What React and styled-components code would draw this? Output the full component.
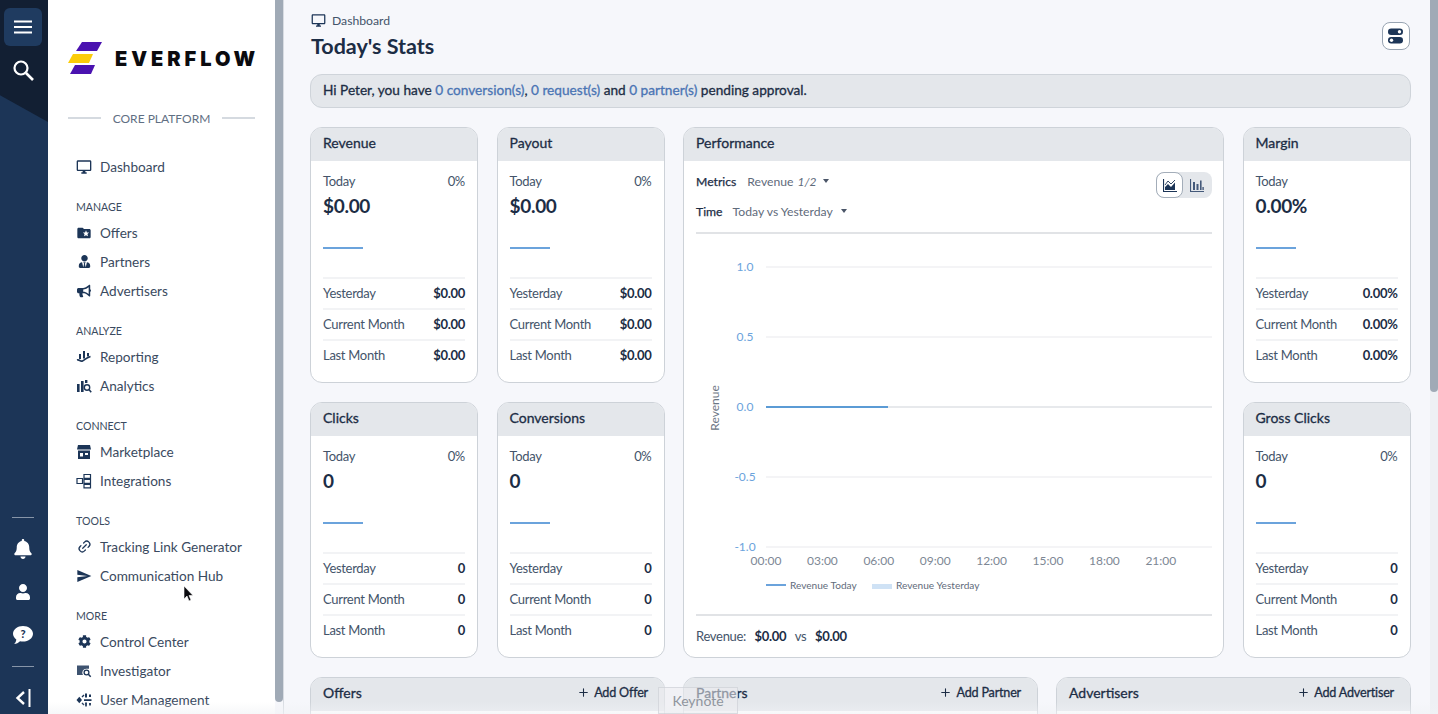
import React from "react";
import styled, { createGlobalStyle } from "styled-components";
import { FaBell, FaBullhorn, FaCog, FaUser, FaUserTie } from "react-icons/fa";
import { MdFolderSpecial, MdOutlineDesktopWindows, MdSend } from "react-icons/md";
import { Link2, Plus } from "lucide-react";

const GlobalStyle = createGlobalStyle`
  html, body {
    margin: 0;
    height: 100%;
    overflow: hidden;
    font-family: Lato, "Liberation Sans", sans-serif;
    background: #f6f7fb;
    color: #1c2d45;
  }
  * { box-sizing: border-box; }
`;

const Page = styled.div`
  position: relative;
  display: flex;
  width: 1438px;
  height: 714px;
  overflow: hidden;
`;

const Rail = styled.nav`
  position: relative;
  flex: 0 0 48px;
  display: flex;
  flex-direction: column;
  align-items: center;
  padding: 8px 2px 0 0;
  background: #1c3557;
  color: #fff;
  overflow: hidden;

  &::before {
    content: "";
    position: absolute;
    inset: 0 0 auto 0;
    height: 122px;
    background: #121f33;
    clip-path: polygon(0 0, 100% 0, 100% 100%, 0 78%);
  }
`;

const RailButton = styled.div`
  position: relative;
  flex-shrink: 0;
  display: flex;
  align-items: center;
  justify-content: center;
  width: 38px;
  height: 38px;
  border-radius: 6px;
  background: ${(p) => (p.$active ? "#1f3b60" : "transparent")};
`;

const RailIcon = styled.div`
  position: relative;
  flex-shrink: 0;
  display: flex;
  align-items: center;
  justify-content: center;
  width: 24px;
  height: ${(p) => p.$h || 43}px;
`;

const RailRule = styled.div`
  flex-shrink: 0;
  width: 22px;
  height: 1px;
  background: #8795a8;
  margin: ${(p) => p.$m || "0"};
`;

const Sidebar = styled.aside`
  flex: 0 0 227px;
  padding: 42px 20px 0;
  background: #fff;
  overflow: hidden;
`;

const Logo = styled.div`
  display: flex;
  align-items: center;
  height: 32px;
  gap: 13px;
`;

const LogoSvg = styled.svg`
  flex-shrink: 0;
`;

const LogoWord = styled.span`
  font-family: Inter, sans-serif;
  font-weight: 900;
  font-size: 20px;
  letter-spacing: 3.95px;
  color: #0b0b0f;
  line-height: 1;
  white-space: nowrap;
  padding-top: 2px;
`;

const PlatformRule = styled.div`
  display: flex;
  align-items: center;
  justify-content: space-between;
  margin-top: 36px;
  height: 16px;
  font-size: 12px;
  color: #5f6f83;

  &::before,
  &::after {
    content: "";
    width: 33px;
    height: 1.5px;
    background: #d5dae0;
  }
`;

const NavHeading = styled.div`
  height: 14px;
  margin: 18.5px 0 4.5px 8px;
  font-size: 10.6px;
  line-height: 14px;
  color: #3a4a60;
`;

const NavGroup = styled.div`
  margin-top: ${(p) => p.$top || 0}px;
`;

const NavItem = styled.div`
  display: flex;
  align-items: center;
  height: 29px;
  padding-left: 8px;
  font-size: 13.6px;
  color: #3a4a60;
`;

const NavIconBox = styled.span`
  display: flex;
  align-items: center;
  justify-content: center;
  width: 16px;
  margin-right: 8px;
  color: #1c3557;
`;

const SideScroll = styled.div`
  flex: 0 0 8px;
  height: 702px;
  background: #a0aab6;
  border-radius: 0 0 4px 4px;
`;

const Main = styled.main`
  flex: 1;
  min-width: 0;
  padding: 13px 19px 0 26px;
  border-left: 1px solid #d8dce2;
`;

const PageScroll = styled.div`
  flex: 0 0 8px;
  height: 100%;
  background: #eef0f4;

  &::before {
    content: "";
    display: block;
    height: 392px;
    background: #a0aab6;
    border-radius: 0 0 4px 4px;
  }
`;

const PageHeader = styled.header`
  display: flex;
  justify-content: space-between;
  height: 61px;
`;

const Crumb = styled.div`
  display: flex;
  align-items: center;
  gap: 6px;
  height: 15px;
  font-size: 12.2px;
  color: #44546a;
  padding-left: 1px;
`;

const Title = styled.h1`
  margin: 5px 0 0 1px;
  font-size: 21.5px;
  line-height: 26px;
  font-weight: 700;
  color: #1c2d45;
`;

const ToggleButton = styled.div`
  display: flex;
  align-items: center;
  justify-content: center;
  width: 28px;
  height: 28px;
  margin: 9px 1px 0 0;
  background: #fff;
  border: 1px solid #98a4b2;
  border-radius: 8px;
`;

const Banner = styled.div`
  display: flex;
  align-items: center;
  height: 34px;
  padding: 0 12px 2px;
  background: #e4e7eb;
  border: 1px solid #cfd4da;
  border-radius: 12px;
  font-size: 13.65px;
  -webkit-text-stroke: 0.3px currentColor;
  color: #1c2d45;
  white-space: pre;
  margin-bottom: 19px;
`;

const BannerLink = styled.span`
  color: #4a74b4;
`;

const Grid = styled.div`
  display: grid;
  grid-template-columns: 168px 168px 541px 168px;
  grid-auto-rows: 256px;
  column-gap: 18.5px;
  row-gap: 19px;
`;

const Card = styled.section`
  display: flex;
  flex-direction: column;
  background: #fff;
  border: 1px solid #cdd2d8;
  border-radius: 12px;
  overflow: hidden;
  grid-row: ${(p) => p.$rows || "auto"};
  grid-column: ${(p) => p.$col || "auto"};
`;

const CardHead = styled.div`
  flex: 0 0 33px;
  display: flex;
  align-items: center;
  justify-content: space-between;
  padding: 0 16px 4px 12px;
  background: #e4e7eb;
  font-size: 14px;
  -webkit-text-stroke: 0.3px currentColor;
  color: #1c2d45;
`;

const CardBody = styled.div`
  flex: 1;
  padding: 12px 12px 0;
`;

const TodayRow = styled.div`
  display: flex;
  justify-content: space-between;
  height: 16px;
  font-size: 13px;
  letter-spacing: -0.3px;
  line-height: 16px;
  color: #44546a;
`;

const BigValue = styled.div`
  margin-top: 4px;
  height: 26px;
  font-size: 19px;
  letter-spacing: -0.3px;
  line-height: 26px;
  font-weight: 700;
  color: #1c2d45;
`;

const Spark = styled.div`
  width: 40px;
  height: 2px;
  margin: 28px 0 28px;
  background: #6ba3dc;
`;

const StatRow = styled.div`
  display: flex;
  align-items: center;
  justify-content: space-between;
  height: 31px;
  padding-bottom: 2px;
  border-top: 2px solid #f2f3f5;
  font-size: 13px;
  letter-spacing: -0.3px;
  color: #44546a;
`;

const StatValue = styled.span`
  font-weight: 700;
  color: #1c2d45;
`;

const PerfControls = styled.div`
  position: relative;
  height: 73px;
  padding: 12px 0 0;
  border-bottom: 2px solid #e1e3e6;
`;

const ControlRow = styled.div`
  display: flex;
  align-items: center;
  height: 16px;
  margin-bottom: 14px;
  font-size: 12.2px;
  color: #5f6b7b;
`;

const ControlLabel = styled.span`
  -webkit-text-stroke: 0.25px currentColor;
  color: #1c2d45;
  margin-right: ${(p) => p.$gap}px;
`;

const Ratio = styled.em`
  margin-left: 4px;
  font-size: 12px;
`;

const Caret = styled.span`
  width: 0;
  height: 0;
  margin-left: ${(p) => p.$gap}px;
  border-left: 3.5px solid transparent;
  border-right: 3.5px solid transparent;
  border-top: 4px solid #4a5568;
`;

const ChartSwitch = styled.div`
  position: absolute;
  top: 11px;
  right: 0;
  display: flex;
  width: 56px;
  height: 26px;
  border-radius: 8px;
  background: #e4e7eb;
`;

const SwitchOption = styled.div`
  display: flex;
  align-items: center;
  justify-content: center;
  width: 27px;
  height: 26px;
  border-radius: 8px;
  background: ${(p) => (p.$on ? "#fff" : "transparent")};
  border: ${(p) => (p.$on ? "1.5px solid #a3adb9" : "none")};
`;

const PerfBody = styled.div`
  flex: 1;
  padding: 0 11px 0 12px;
`;

const ChartSvg = styled.svg`
  display: block;
  width: 516px;
  height: 380px;
  font-family: Lato, sans-serif;
`;

const PerfFooter = styled.div`
  display: flex;
  align-items: center;
  gap: 8.5px;
  height: 42px;
  border-top: 2px solid #e1e3e6;
  font-size: 13px;
  letter-spacing: -0.3px;
  color: #44546a;
`;

const WideRow = styled.div`
  display: grid;
  grid-template-columns: repeat(3, 355px);
  column-gap: 18px;
  margin-top: 19px;
`;

const AddLink = styled.span`
  display: flex;
  align-items: center;
  gap: 4px;
  font-size: 12.6px;
  letter-spacing: -0.2px;
`;

const WideCard = styled(Card)`
  height: 60px;
`;

const KeynoteTag = styled.div`
  position: absolute;
  left: 658px;
  top: 687px;
  width: 80px;
  height: 27px;
  display: flex;
  align-items: center;
  justify-content: center;
  border: 1px solid rgba(200, 204, 210, 0.6);
  background: rgba(236, 237, 240, 0.55);
  font-size: 14px;
  color: #8f959d;
`;

const BottomFade = styled.div`
  position: absolute;
  left: 48px;
  right: 0;
  bottom: 0;
  height: 12px;
  background: linear-gradient(rgba(255, 255, 255, 0), rgba(240, 242, 245, 0.6));
  pointer-events: none;
`;

const Pointer = styled.svg`
  position: absolute;
  left: 183px;
  top: 585px;
`;

const Ico = ({ children, s = 16, vb = "0 0 16 16" }) => (
  <svg width={s} height={s} viewBox={vb} fill="none">
    {children}
  </svg>
);

const ReportingIcon = () => (
  <Ico>
    <path d="M3 5h2v5H3zM7 2h2v7.500H7zM11 4h2v3.500h-2z" fill="#1c3557" />
    <path d="M1 11c2.500-1 3 2 5.500 1s3-3 8-4.500" stroke="#1c3557" strokeWidth="1.600" />
  </Ico>
);

const AnalyticsIcon = () => (
  <Ico>
    <path d="M1 6h2.600v8H1zM5 3h2.600v11H5z" fill="#1c3557" />
    <rect x="9" y="2" width="2.400" height="3" fill="#1c3557" />
    <circle cx="11" cy="9.500" r="2.700" stroke="#1c3557" strokeWidth="1.400" />
    <path d="M13 11.600l2.200 2.600" stroke="#1c3557" strokeWidth="1.600" />
  </Ico>
);

const MarketplaceIcon = () => (
  <Ico>
    <path d="M2 1h12l1 4.500H1z" fill="#1c3557" />
    <path d="M2 6.500h12V15H2zM4 9v3.500h3V9zM9 9v2h3V9z" fill="#1c3557" fillRule="evenodd" />
  </Ico>
);

const IntegrationsIcon = () => (
  <Ico>
    <path
      d="M1 5.500h5.500v5H1zM8 1.500h6.500v3.800H8zM8 6.500h6.500v3.800H8zM8 11.500h6.500v3.400H8z"
      stroke="#1c3557"
      strokeWidth="1.200"
    />
  </Ico>
);

const InvestigatorIcon = () => (
  <Ico>
    <path d="M1 2.500h12v3.200h-2.500a4 4 0 0 0-3.500 6.300H1z" fill="#1c3557" opacity="0.85" />
    <circle cx="10.500" cy="9.500" r="2.400" stroke="#1c3557" strokeWidth="1.300" />
    <path d="M12.300 11.300l2.400 2.400" stroke="#1c3557" strokeWidth="1.600" />
  </Ico>
);

const UserManageIcon = () => (
  <Ico>
    <path
      d="M0.500 8l2.800-3.200L6 8l-2.700 3.200zM9 1.500h2v4H9zM8 7.200h7.500v1.800H8zM9 10.600h2v4H9zM13 2.500h2v2.600h-2zM13 11h2v2.600h-2z"
      fill="#1c3557"
    />
    <path d="M6 5l2-2M6 11l2 2" stroke="#1c3557" strokeWidth="1.400" />
  </Ico>
);

const navGroups = [
  {
    title: "MANAGE",
    items: [
      ["Offers", <MdFolderSpecial size={16} />],
      ["Partners", <FaUserTie size={13} />],
      ["Advertisers", <FaBullhorn size={14} />],
    ],
  },
  {
    title: "ANALYZE",
    items: [
      ["Reporting", <ReportingIcon />],
      ["Analytics", <AnalyticsIcon />],
    ],
  },
  {
    title: "CONNECT",
    items: [
      ["Marketplace", <MarketplaceIcon />],
      ["Integrations", <IntegrationsIcon />],
    ],
  },
  {
    title: "TOOLS",
    items: [
      ["Tracking Link Generator", <Link2 size={15} strokeWidth={2} style={{ transform: "rotate(-45deg)" }} />],
      ["Communication Hub", <MdSend size={16} />],
    ],
  },
  {
    title: "MORE",
    items: [
      ["Control Center", <FaCog size={13} />],
      ["Investigator", <InvestigatorIcon />],
      ["User Management", <UserManageIcon />],
    ],
  },
];

const LogoMark = () => (
  <LogoSvg width="34" height="32" viewBox="0 0 34 32">
    <path d="M14 0h20l-5 9H8z" fill="#4a12b0" />
    <path d="M5 12h20l-4 9H0z" fill="#fbcc0a" />
    <path d="M7 23h20l-4 9H2z" fill="#4a12b0" />
  </LogoSvg>
);

const StatCard = ({ title, value, percent, today }) => (
  <Card>
    <CardHead>{title}</CardHead>
    <CardBody>
      <TodayRow>
        <span>Today</span>
        {percent && <span>0%</span>}
      </TodayRow>
      <BigValue>{today}</BigValue>
      <Spark />
      {["Yesterday", "Current Month", "Last Month"].map((label) => (
        <StatRow key={label}>
          <span>{label}</span>
          <StatValue>{value}</StatValue>
        </StatRow>
      ))}
    </CardBody>
  </Card>
);

const yTicks = [
  ["1.0", 33],
  ["0.5", 103],
  ["0.0", 173],
  ["-0.5", 243],
  ["-1.0", 313],
];
const xTicks = ["00:00", "03:00", "06:00", "09:00", "12:00", "15:00", "18:00", "21:00"];

const PerformanceChart = () => (
  <ChartSvg viewBox="0 0 516 380">
    {yTicks.map(([label, y]) => (
      <g key={label}>
        <line x1="70" x2="516" y1={y} y2={y} stroke={y === 173 ? "#dfe2e6" : "#f0f1f3"} strokeWidth="1.500" />
        <text x="49" y={y + 4} textAnchor="middle" fontSize="12" fill="#6ba3dc">
          {label}
        </text>
      </g>
    ))}
    <line x1="70" x2="192" y1="173" y2="173" stroke="#5b9bd5" strokeWidth="2" />
    {xTicks.map((label, i) => (
      <text key={label} x={70 + i * 56.4} y="331" textAnchor="middle" fontSize="12" fill="#7d8794">
        {label}
      </text>
    ))}
    <text transform="translate(23 174) rotate(-90)" textAnchor="middle" fontSize="12" fill="#6b7684">
      Revenue
    </text>
    <line x1="70" x2="90" y1="351" y2="351" stroke="#6ba3dc" strokeWidth="2" />
    <text x="94" y="355" fontSize="10.1" fill="#5f6b7b">
      Revenue Today
    </text>
    <rect x="176" y="350" width="20" height="5" fill="#cfe2f5" />
    <text x="200" y="355" fontSize="10.1" fill="#5f6b7b">
      Revenue Yesterday
    </text>
  </ChartSvg>
);

const App = () => (
  <Page>
    <GlobalStyle />
    <Rail>
      <RailButton $active>
        <svg width="18" height="14" viewBox="0 0 18 14">
          <path d="M0 1.500h18M0 7h18M0 12.500h18" stroke="#fff" strokeWidth="2" />
        </svg>
      </RailButton>
      <RailIcon $h="47">
        <svg width="22" height="22" viewBox="0 0 22 22" fill="none">
          <circle cx="9" cy="9" r="6.500" stroke="#fff" strokeWidth="2.200" />
          <path d="M14 14l7 7" stroke="#fff" strokeWidth="2.600" />
        </svg>
      </RailIcon>
      <RailRule $m="424px 0 0" />
      <RailIcon $h="62">
        <FaBell size={20} />
      </RailIcon>
      <RailIcon $h="24">
        <FaUser size={16} />
      </RailIcon>
      <RailIcon $h="62">
        <svg width="20" height="19" viewBox="0 0 20 19">
          <path
            d="M10 0c5.500 0 10 3.400 10 7.800s-4.500 7.800-10 7.800c-1 0-2-.1-3-.4C5.500 16.700 3.400 18 1 18c1.400-1.200 2.200-2.800 2.300-4.600C1.300 12 0 10 0 7.800 0 3.400 4.500 0 10 0z"
            fill="#fff"
          />
          <text x="10" y="12" textAnchor="middle" fontSize="11" fontWeight="900" fill="#1c3557" fontFamily="Lato">
            ?
          </text>
        </svg>
      </RailIcon>
      <RailRule />
      <RailIcon $h="62">
        <svg width="16" height="18" viewBox="0 0 16 18" fill="none">
          <path d="M9 3L2.500 9 9 15" stroke="#fff" strokeWidth="2.400" />
          <path d="M14.500 0v18" stroke="#fff" strokeWidth="2" />
        </svg>
      </RailIcon>
    </Rail>

    <Sidebar>
      <Logo>
        <LogoMark />
        <LogoWord>EVERFLOW</LogoWord>
      </Logo>
      <PlatformRule>CORE PLATFORM</PlatformRule>
      <NavGroup $top="26">
        <NavItem>
          <NavIconBox>
            <MdOutlineDesktopWindows size={16} />
          </NavIconBox>
          Dashboard
        </NavItem>
      </NavGroup>
      {navGroups.map((group) => (
        <NavGroup key={group.title}>
          <NavHeading>{group.title}</NavHeading>
          {group.items.map(([label, icon]) => (
            <NavItem key={label}>
              <NavIconBox>{icon}</NavIconBox>
              {label}
            </NavItem>
          ))}
        </NavGroup>
      ))}
    </Sidebar>
    <SideScroll />

    <Main>
      <PageHeader>
        <div>
          <Crumb>
            <MdOutlineDesktopWindows size={15} color="#1c3557" />
            Dashboard
          </Crumb>
          <Title>Today's Stats</Title>
        </div>
        <ToggleButton>
          <svg width="16" height="16" viewBox="0 0 16 16">
            <rect x="0" y="0.500" width="15" height="6.500" rx="3.200" fill="#1c3557" />
            <circle cx="11.500" cy="3.700" r="1.700" fill="#fff" />
            <rect x="0" y="9" width="15" height="6.500" rx="3.200" fill="#1c3557" />
            <circle cx="3.500" cy="12.200" r="1.700" fill="#fff" />
          </svg>
        </ToggleButton>
      </PageHeader>

      <Banner>
        Hi Peter, you have <BannerLink>0 conversion(s)</BannerLink>, <BannerLink>0 request(s)</BannerLink> and{" "}
        <BannerLink>0 partner(s)</BannerLink> pending approval.
      </Banner>

      <Grid>
        <StatCard title="Revenue" today="$0.00" value="$0.00" percent />
        <StatCard title="Payout" today="$0.00" value="$0.00" percent />
        <Card $rows="1 / span 2" $col="3">
          <CardHead>Performance</CardHead>
          <PerfBody>
            <PerfControls>
              <ControlRow>
                <ControlLabel $gap={11}>Metrics</ControlLabel>
                Revenue
                <Ratio>1/2</Ratio>
                <Caret $gap={7} />
              </ControlRow>
              <ControlRow>
                <ControlLabel $gap={10}>Time</ControlLabel>
                Today vs Yesterday
                <Caret $gap={8} />
              </ControlRow>
              <ChartSwitch>
                <SwitchOption $on>
                  <svg width="14" height="13" viewBox="0 0 14 13" fill="none">
                    <path d="M0.500 0v12.500H14" stroke="#1c3557" strokeWidth="1.200" />
                    <path d="M2 6l3-4 3 3 4-4" stroke="#1c3557" strokeWidth="0.900" />
                    <path d="M2 11V8l3-3 3 3 4-4.500V11z" fill="#1c3557" />
                  </svg>
                </SwitchOption>
                <SwitchOption>
                  <svg width="14" height="13" viewBox="0 0 14 13">
                    <path d="M0.500 0v12.500H14" stroke="#44597a" fill="none" strokeWidth="1.200" />
                    <path d="M3 3h2v8H3zM6.500 5h2v6h-2zM10 1.500h1.600V11H10zM12.400 8h1.400v3h-1.400z" fill="#44597a" />
                  </svg>
                </SwitchOption>
              </ChartSwitch>
            </PerfControls>
            <PerformanceChart />
            <PerfFooter>
              Revenue: <StatValue>$0.00</StatValue> vs <StatValue>$0.00</StatValue>
            </PerfFooter>
          </PerfBody>
        </Card>
        <StatCard title="Margin" today="0.00%" value="0.00%" />
        <StatCard title="Clicks" today="0" value="0" percent />
        <StatCard title="Conversions" today="0" value="0" percent />
        <StatCard title="Gross Clicks" today="0" value="0" percent />
      </Grid>

      <WideRow>
        {["Offer", "Partner", "Advertiser"].map((name) => (
          <WideCard key={name}>
            <CardHead>
              {name}s
              <AddLink>
                <Plus size={13} />
                Add {name}
              </AddLink>
            </CardHead>
          </WideCard>
        ))}
      </WideRow>
    </Main>
    <PageScroll />

    <BottomFade />
    <KeynoteTag>Keynote</KeynoteTag>
    <Pointer width="12" height="18" viewBox="0 0 12 18">
      <path d="M1 1v13l3-3 2 5 2-1-2-4.500h4z" fill="#0b0b0f" stroke="#fff" strokeWidth="0.600" />
    </Pointer>
  </Page>
);

export default App;
